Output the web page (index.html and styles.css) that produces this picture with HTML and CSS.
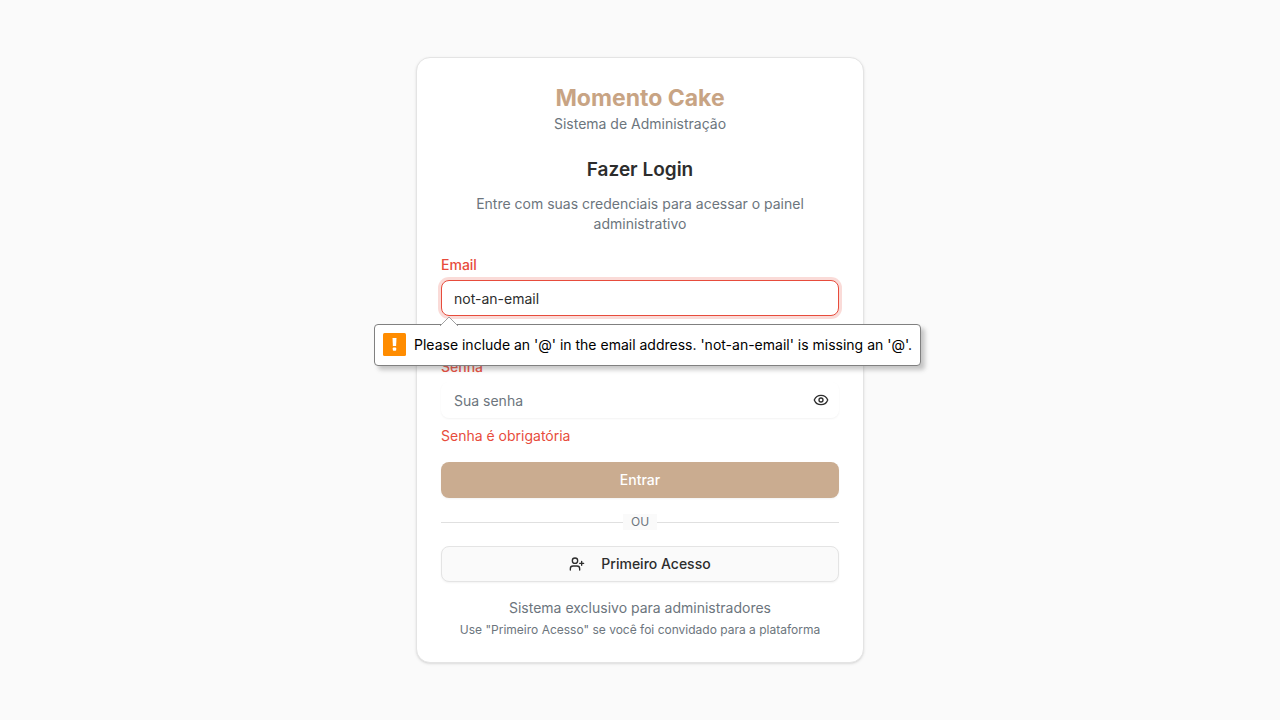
FILE: index.html
```html
<!DOCTYPE html>
<html lang="pt-BR">
<head>
<meta charset="utf-8">
<meta name="viewport" content="width=device-width, initial-scale=1">
<title>Momento Cake</title>
<link rel="stylesheet" href="styles.css">
</head>
<body>
<main class="card">
  <header class="brand">
    <h1 class="brand-name">Momento Cake</h1>
    <p class="muted">Sistema de Administração</p>
  </header>
  <section class="intro">
    <h2 class="intro-title">Fazer Login</h2>
    <p class="muted">Entre com suas credenciais para acessar o painel administrativo</p>
  </section>
  <form class="form" novalidate>
    <div class="field">
      <label class="label" for="email">Email</label>
      <div class="control">
        <input class="input input-invalid" id="email" type="email" value="not-an-email" aria-invalid="true" aria-describedby="email-bubble">
        <div class="bubble" id="email-bubble" role="alert">
          <svg class="bubble-arrow" width="18" height="10" viewBox="0 0 18 10" aria-hidden="true"><path d="M0 10 9 1 18 10" fill="#fff" stroke="#a0a0a0"/></svg>
          <svg width="23" height="23" viewBox="0 0 23 23" aria-hidden="true"><rect width="23" height="23" rx="1.5" fill="#ff8c00"/><path d="M9.5 5h4l-.4 8h-3.2z" fill="#fff"/><rect x="9.8" y="14.4" width="3.4" height="3.4" rx=".8" fill="#fff"/></svg>
          <span>Please include an '@' in the email address. 'not-an-email' is missing an '@'.</span>
        </div>
      </div>
      <p class="message"></p>
    </div>
    <div class="field">
      <label class="label" for="password">Senha</label>
      <div class="control">
        <input class="input input-password" id="password" type="password" placeholder="Sua senha" aria-invalid="true" aria-describedby="password-message">
        <button class="reveal" type="button" aria-label="Mostrar senha">
          <svg class="icon" viewBox="0 0 24 24" aria-hidden="true"><path d="M2.062 12.348a1 1 0 0 1 0-.696 10.75 10.75 0 0 1 19.876 0 1 1 0 0 1 0 .696 10.75 10.75 0 0 1-19.876 0"/><circle cx="12" cy="12" r="3"/></svg>
        </button>
      </div>
      <p class="message" id="password-message">Senha é obrigatória</p>
    </div>
    <button class="button button-primary" type="submit">Entrar</button>
    <div class="divider"><span class="divider-text">OU</span></div>
    <button class="button button-outline" type="button">
      <svg class="icon" viewBox="0 0 24 24" aria-hidden="true"><path d="M16 21v-2a4 4 0 0 0-4-4H6a4 4 0 0 0-4 4v2"/><circle cx="9" cy="7" r="4"/><path d="M19 8v6M22 11h-6"/></svg>
      Primeiro Acesso
    </button>
  </form>
  <footer class="notes">
    <p class="muted">Sistema exclusivo para administradores</p>
    <p class="muted muted-small">Use "Primeiro Acesso" se você foi convidado para a plataforma</p>
  </footer>
</main>
</body>
</html>
```
FILE: styles.css
```css
* { box-sizing: border-box; margin: 0; }

body {
  min-height: 100vh;
  padding: 16px;
  display: grid;
  place-items: center;
  background: #fafafa;
  color: #2d2d2d;
  font: 14px/20px Inter, "Liberation Sans", sans-serif;
}

.card {
  width: 100%;
  max-width: 448px;
  padding: 24px;
  display: flex;
  flex-direction: column;
  background: #fff;
  border: 1px solid #e4e4e4;
  border-radius: 14px;
  box-shadow: 0 1px 3px rgba(0, 0, 0, .1), 0 1px 2px -1px rgba(0, 0, 0, .1);
}

.brand, .intro, .notes { text-align: center; }
.brand { margin-bottom: 24px; }
.brand-name { color: #c8a484; font-size: 23px; line-height: 32px; font-weight: 700; }
.muted { color: #6c757d; }
.muted-small { font-size: 12px; line-height: 16px; }

.intro { display: grid; gap: 12px; padding: 0 24px; margin-bottom: 24px; }
.intro-title { font-size: 19px; line-height: 24px; font-weight: 600; }

.form { display: grid; gap: 16px; }
.field { display: grid; gap: 8px; }
.label { color: #e74c3c; line-height: 14px; font-weight: 500; justify-self: start; }
.message { color: #e74c3c; min-height: 20px; }
.control { position: relative; display: grid; }

.input {
  width: 100%;
  height: 36px;
  padding: 4px 12px;
  font: inherit;
  color: inherit;
  background: #fff;
  border: 1px solid transparent;
  border-radius: 8px;
  outline: none;
  box-shadow: 0 1px 2px rgba(0, 0, 0, .05);
}
.input::placeholder { color: #6c757d; opacity: 1; }
.input-invalid { border-color: #e74c3c; box-shadow: 0 0 0 3px rgba(231, 76, 60, .2); }
.input-password { padding-right: 40px; }

.reveal {
  position: absolute;
  inset: 0 0 0 auto;
  padding: 0 10px;
  display: flex;
  align-items: center;
  color: inherit;
  background: none;
  border: 0;
}

.icon {
  width: 16px;
  height: 16px;
  fill: none;
  stroke: currentColor;
  stroke-width: 2;
  stroke-linecap: round;
  stroke-linejoin: round;
}

.bubble {
  position: absolute;
  z-index: 1;
  top: calc(100% + 8px);
  left: -67px;
  display: flex;
  align-items: flex-start;
  gap: 8px;
  padding: 8px;
  color: #000;
  line-height: 24px;
  white-space: nowrap;
  background: #fff;
  border: 1px solid #808080;
  border-radius: 4px;
  box-shadow: 4px 4px 4px rgba(100, 100, 100, .35);
}
.bubble-arrow { position: absolute; left: 65px; bottom: 100%; margin-bottom: -1px; }

.button {
  height: 36px;
  padding: 8px 16px;
  display: flex;
  align-items: center;
  justify-content: center;
  gap: 16px;
  font: inherit;
  font-weight: 500;
  border: 0;
  border-radius: 8px;
  box-shadow: 0 1px 2px rgba(0, 0, 0, .05);
}
.button-primary { color: #fff; background: #caac90; }
.button-outline { color: #2d2d2d; background: #fafafa; border: 1px solid #e4e4e4; }

.divider { display: flex; align-items: center; color: #6c757d; font-size: 12px; line-height: 16px; }
.divider::before, .divider::after { content: ""; flex: 1; height: 1px; background: #e0e0e0; }
.divider-text { padding: 0 8px; background: #fafafa; }

.notes { display: grid; gap: 4px; margin-top: 16px; }
```
